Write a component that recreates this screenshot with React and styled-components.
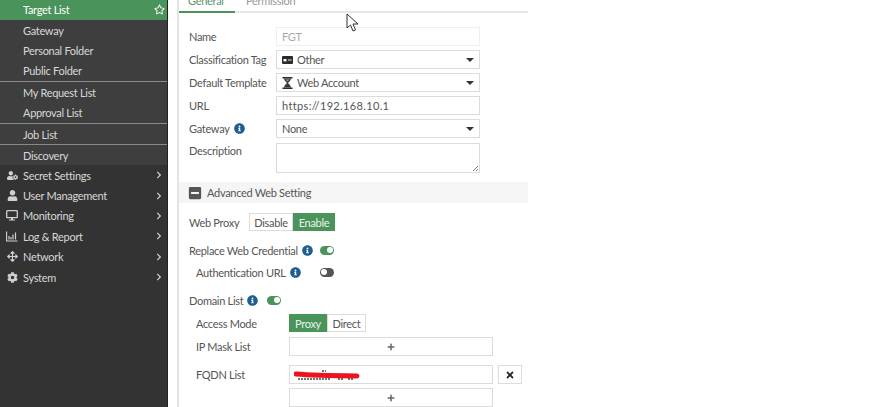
import React from 'react';
import styled, { createGlobalStyle } from 'styled-components';
import {
  FaRegStar, FaUserCog, FaUser, FaArrowsAlt, FaCog, FaChevronRight,
  FaInfoCircle, FaMinusSquare, FaTimes, FaPlus,
} from 'react-icons/fa';

const GREEN = '#4a945c';

const GlobalStyle = createGlobalStyle`
  html, body { margin: 0; padding: 0; background: #fff; }
  body { width: 884px; height: 407px; overflow: hidden; font-family: Lato, "Open Sans", sans-serif; }
`;

const Page = styled.div`
  position: relative;
  display: flex;
  width: 884px;
  height: 407px;
  overflow: hidden;
  font-size: 11px;
  letter-spacing: -0.3px;
`;

const Sidebar = styled.nav`
  width: 168px;
  height: 407px;
  flex: none;
  background: #333;
  border-right: 1px solid #222;
  box-sizing: border-box;
  color: #d8d8d8;
`;

const SubMenu = styled.div`
  background: #3e3e3e;
  height: 165px;
  overflow: hidden;
`;

const SubList = styled.div`
  margin-top: -0.5px;
`;

const SubGroup = styled.div`
  border-bottom: 1px solid #8a8a8a;
`;

const SubItem = styled.div`
  display: flex;
  align-items: center;
  justify-content: space-between;
  height: 20.4px;
  padding: 0 2px 0 23px;
  background: ${(p) => (p.$active ? GREEN : 'transparent')};
  color: ${(p) => (p.$active ? '#fff' : '#d8d8d8')};
  svg { font-size: 11px; }
`;

const MainItem = styled.div`
  display: flex;
  align-items: center;
  height: 20.4px;
  padding: 0 4px 0 6px;
`;

const MainIcon = styled.span`
  width: 12px;
  margin-right: 5px;
  display: flex;
  justify-content: center;
  font-size: 11px;
  color: #d0d0d0;
`;

const MainLabel = styled.span`
  flex: 1;
`;

const Chevron = styled(FaChevronRight)`
  font-size: 8px;
  color: #d0d0d0;
`;

const Panel = styled.main`
  width: 351px;
  height: 407px;
  margin-left: 9px;
  flex: none;
  border-left: 2px solid #e4e4e4;
  box-sizing: border-box;
  color: #555;
`;

const Tabs = styled.div`
  display: flex;
  height: 13px;
  box-shadow: inset 0 -2px 0 #e8e8e8;
  overflow: hidden;
`;

const Tab = styled.div`
  width: 56px;
  height: 13px;
  padding-left: ${(p) => (p.$active ? '9px' : '11px')};
  box-sizing: border-box;
  line-height: 1px;
  color: ${(p) => (p.$active ? '#5d8f6d' : '#999')};
  border-bottom: 2px solid ${(p) => (p.$active ? GREEN : 'transparent')};
  white-space: nowrap;
`;

const Form = styled.div`
  padding: 14px 0 0 10px;
`;

const Row = styled.div`
  display: flex;
  align-items: ${(p) => (p.$top ? 'flex-start' : 'center')};
  min-height: 18px;
  margin-top: ${(p) => p.$mt || 0}px;
  margin-left: ${(p) => p.$indent || 0}px;
`;

const Label = styled.div`
  display: flex;
  align-items: center;
  gap: 4px;
  width: ${(p) => p.$w || 87}px;
  flex: none;
  white-space: nowrap;
  padding-top: ${(p) => (p.$top ? '1px' : 0)};
`;

const Field = styled.div`
  display: flex;
  align-items: center;
  gap: 4px;
  width: 204px;
  height: ${(p) => p.$h || 19}px;
  padding: 0 5px;
  box-sizing: border-box;
  border: 1px solid ${(p) => (p.$faint ? '#efefef' : '#dcdcdc')};
  background: #fff;
  color: ${(p) => (p.$faint ? '#aaa' : '#555')};
  position: relative;
  white-space: nowrap;
  flex: none;
`;

const UrlText = styled.span`
  letter-spacing: 0.35px;
`;

const Caret = styled.span`
  margin-left: auto;
  width: 0;
  height: 0;
  border-left: 4px solid transparent;
  border-right: 4px solid transparent;
  border-top: 4px solid #333;
`;

const Resize = styled.svg`
  position: absolute;
  right: 0;
  bottom: 0;
`;

const SectionHead = styled.div`
  display: flex;
  align-items: center;
  gap: 5px;
  height: 21px;
  margin: 9px 0 0 -10px;
  padding-left: 9px;
  background: #f5f5f5;
  svg { font-size: 14px; color: #555; }
`;

const Segmented = styled.div`
  display: flex;
  height: 18px;
`;

const Segment = styled.div`
  display: flex;
  align-items: center;
  justify-content: center;
  width: ${(p) => p.$w}px;
  box-sizing: border-box;
  border: 1px solid ${(p) => (p.$on ? GREEN : '#dcdcdc')};
  background: ${(p) => (p.$on ? GREEN : '#fff')};
  color: ${(p) => (p.$on ? '#e8f4ea' : '#555')};
`;

const Info = styled(FaInfoCircle)`
  font-size: 11px;
  color: #1d5f92;
  flex: none;
`;

const Toggle = styled.span`
  display: inline-flex;
  justify-content: ${(p) => (p.$on ? 'flex-end' : 'flex-start')};
  align-items: center;
  width: 14px;
  height: 9px;
  padding: 0 1px;
  box-sizing: border-box;
  border-radius: 5px;
  background: ${(p) => (p.$on ? GREEN : '#555')};
  &::after {
    content: '';
    width: 6px;
    height: 6px;
    border-radius: 50%;
    background: #fff;
  }
`;

const PlusField = styled(Field)`
  justify-content: center;
  svg { font-size: 8px; color: #666; }
`;

const CloseButton = styled.div`
  display: flex;
  align-items: center;
  justify-content: center;
  width: 24px;
  height: 19px;
  margin-left: 5px;
  box-sizing: border-box;
  border: 1px solid #dcdcdc;
  svg { font-size: 10px; color: #222; }
`;

const Cursor = styled.svg`
  position: absolute;
  left: 346px;
  top: 13px;
`;

const Scribble = styled.svg`
  position: absolute;
  left: 4px;
  top: 2px;
`;

const MonitorIcon = () => (
  <svg width="12" height="11" viewBox="0 0 12 11">
    <rect x="0.7" y="0.7" width="10.6" height="7" rx="0.8" fill="none" stroke="currentColor" strokeWidth="1.3" />
    <path d="M5 8 H7 V9.5 H9 V10.5 H3 V9.5 H5 Z" fill="currentColor" />
  </svg>
);

const ChartIcon = () => (
  <svg width="12" height="11" viewBox="0 0 12 11">
    <path d="M0.6 0.5 V10 H11.5" fill="none" stroke="currentColor" strokeWidth="1.1" />
    <path d="M3 5 V8.6 M5 6 V8.6 M7 3.5 V8.6 M9.5 1.5 V8.6" fill="none" stroke="currentColor" strokeWidth="1.2" />
  </svg>
);

const CardIcon = () => (
  <svg width="11" height="8" viewBox="0 0 11 8">
    <rect width="11" height="8" rx="1" fill="#2b2b2b" />
    <rect x="1.5" y="3" width="3" height="2.4" fill="#fff" />
    <rect x="6" y="3.4" width="3.6" height="1.2" fill="#ccc" />
  </svg>
);

const HourglassIcon = () => (
  <svg width="11" height="12" viewBox="0 0 11 12">
    <path d="M0.5 0.8 H10.5 M0.5 11.2 H10.5" stroke="#2b2b2b" strokeWidth="1.5" />
    <path d="M2 1.5 H9 C9 4 6.5 5 6 6 C6.5 7 9 8 9 10.5 H2 C2 8 4.5 7 5 6 C4.5 5 2 4 2 1.5 Z" fill="#3a3a3a" />
    <path d="M3.6 2.5 H7.4 L5.5 4.6 Z" fill="#999" />
  </svg>
);

const subGroups = [
  ['Gateway', 'Personal Folder', 'Public Folder'],
  ['My Request List', 'Approval List'],
  ['Job List'],
];

const mainItems = [
  ['Secret Settings', FaUserCog],
  ['User Management', FaUser],
  ['Monitoring', MonitorIcon],
  ['Log & Report', ChartIcon],
  ['Network', FaArrowsAlt],
  ['System', FaCog],
];

export default function App() {
  return (
    <Page>
      <GlobalStyle />
      <Sidebar>
        <SubMenu>
          <SubList>
            <SubItem $active>Target List<FaRegStar /></SubItem>
            {subGroups.map((group) => (
              <SubGroup key={group[0]}>
                {group.map((item) => <SubItem key={item}>{item}</SubItem>)}
              </SubGroup>
            ))}
            <SubItem>Discovery</SubItem>
          </SubList>
        </SubMenu>
        {mainItems.map(([label, Icon]) => (
          <MainItem key={label}>
            <MainIcon><Icon /></MainIcon>
            <MainLabel>{label}</MainLabel>
            <Chevron />
          </MainItem>
        ))}
      </Sidebar>
      <Panel>
        <Tabs>
          <Tab $active>General</Tab>
          <Tab>Permission</Tab>
        </Tabs>
        <Form>
          <Row>
            <Label>Name</Label>
            <Field $faint>FGT</Field>
          </Row>
          <Row $mt={4}>
            <Label>Classification Tag</Label>
            <Field><CardIcon />Other<Caret /></Field>
          </Row>
          <Row $mt={4}>
            <Label>Default Template</Label>
            <Field><HourglassIcon />Web Account<Caret /></Field>
          </Row>
          <Row $mt={4}>
            <Label>URL</Label>
            <Field><UrlText>https://192.168.10.1</UrlText></Field>
          </Row>
          <Row $mt={4}>
            <Label>Gateway<Info /></Label>
            <Field>None<Caret /></Field>
          </Row>
          <Row $top $mt={5}>
            <Label $top>Description</Label>
            <Field $h={30}>
              <Resize width="8" height="8" viewBox="0 0 8 8">
                <path d="M7 2 L2 7 M7 5 L5 7" stroke="#777" strokeWidth="1" fill="none" />
              </Resize>
            </Field>
          </Row>
          <SectionHead><FaMinusSquare />Advanced Web Setting</SectionHead>
          <Row $mt={10}>
            <Label $w={60}>Web Proxy</Label>
            <Segmented>
              <Segment $w={44}>Disable</Segment>
              <Segment $w={42} $on>Enable</Segment>
            </Segmented>
          </Row>
          <Row $mt={10}>
            <Label $w={131}>Replace Web Credential<Info /></Label>
            <Toggle $on />
          </Row>
          <Row $mt={4} $indent={7}>
            <Label $w={124}>Authentication URL<Info /></Label>
            <Toggle />
          </Row>
          <Row $mt={10}>
            <Label $w={78}>Domain List<Info /></Label>
            <Toggle $on />
          </Row>
          <Row $mt={5} $indent={7}>
            <Label $w={93}>Access Mode</Label>
            <Segmented>
              <Segment $w={38} $on>Proxy</Segment>
              <Segment $w={39}>Direct</Segment>
            </Segmented>
          </Row>
          <Row $mt={5} $indent={7}>
            <Label $w={93}>IP Mask List</Label>
            <PlusField><FaPlus /></PlusField>
          </Row>
          <Row $mt={9} $indent={7}>
            <Label $w={93}>FQDN List</Label>
            <Field>
              <Scribble width="66" height="14" viewBox="0 0 66 14">
                <path d="M4 11 H36 M44 11 H50 M54 11 H60 M28 3 H32" stroke="#444" strokeWidth="1.5" strokeDasharray="2 1" fill="none" />
                <path d="M2 6 C 15 7, 30 7.5, 63 8" stroke="#ea1520" strokeWidth="5" fill="none" strokeLinecap="round" />
              </Scribble>
            </Field>
            <CloseButton><FaTimes /></CloseButton>
          </Row>
          <Row $mt={4} $indent={100}>
            <PlusField><FaPlus /></PlusField>
          </Row>
        </Form>
      </Panel>
      <Cursor width="14" height="20" viewBox="0 0 14 20">
        <path d="M1 1 L1 15 L4.5 12 L7 18 L9.5 17 L7 11 L12 11 Z" fill="#fff" stroke="#333" strokeWidth="1" strokeLinejoin="round" />
      </Cursor>
    </Page>
  );
}
